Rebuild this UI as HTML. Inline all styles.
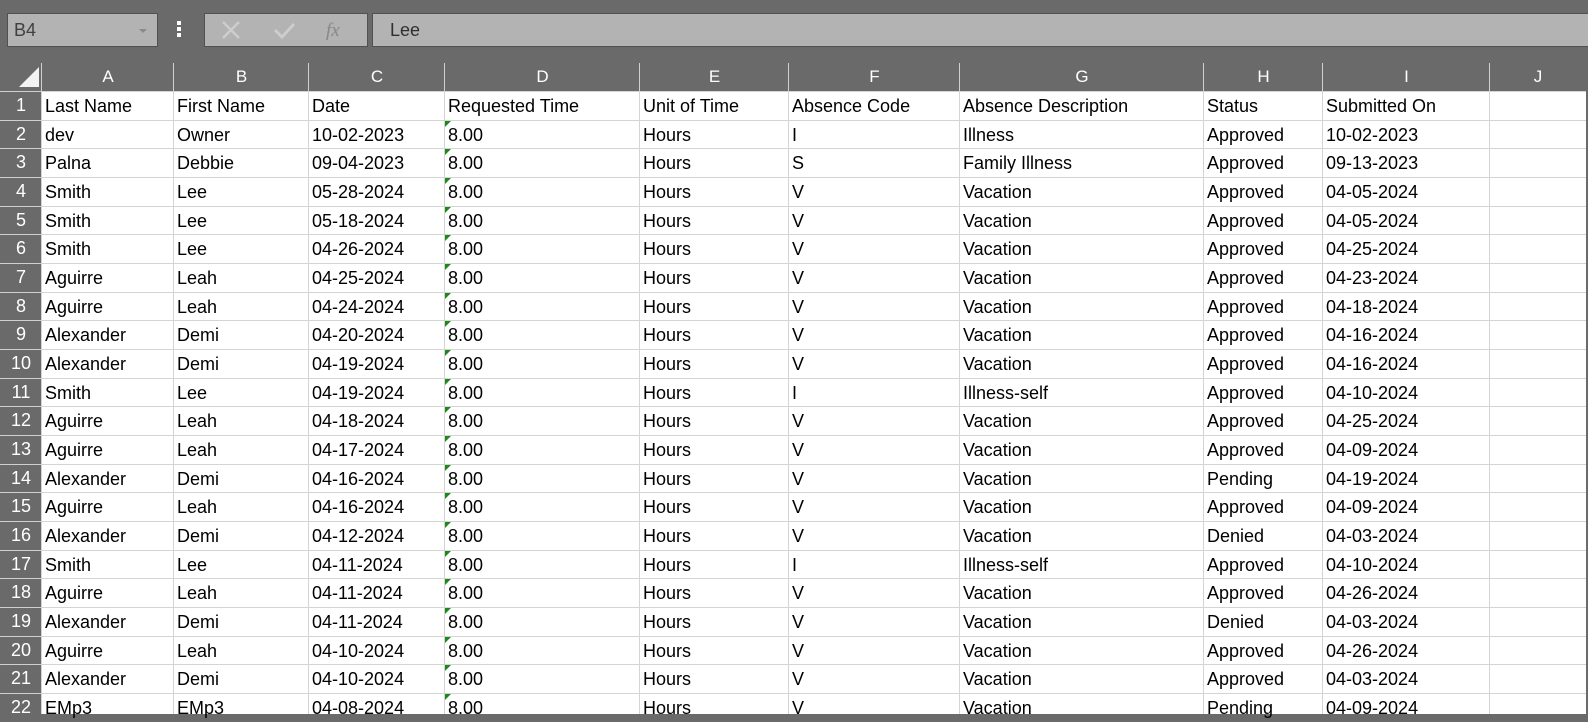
<!DOCTYPE html><html><head><meta charset="utf-8"><style>
*{margin:0;padding:0;box-sizing:border-box}
body{width:1588px;height:714px;overflow:hidden;background:#6a6a6a;font-family:"Liberation Sans",sans-serif;position:relative}
.a{position:absolute}
.c{position:absolute;font-size:18px;color:#000;white-space:nowrap;line-height:28px;padding-left:3px;overflow:hidden}
.h{position:absolute;color:#fff;font-size:17px;text-align:center;line-height:28px}
</style></head><body>
<div class="a" style="left:7px;top:13px;width:151px;height:34px;background:#b3b3b3;border:1px solid #505050"></div>
<div class="a" style="left:14px;top:13px;line-height:34px;font-size:18px;color:#404040">B4</div>
<div class="a" style="left:139px;top:29px;border-left:4px solid transparent;border-right:4px solid transparent;border-top:4px solid #8a8a8a"></div>
<div class="a" style="left:177px;top:21px;width:4px;height:4px;background:#fff"></div>
<div class="a" style="left:177px;top:27px;width:4px;height:4px;background:#fff"></div>
<div class="a" style="left:177px;top:33px;width:4px;height:4px;background:#fff"></div>
<div class="a" style="left:204px;top:13px;width:164px;height:34px;background:#b3b3b3;border:1px solid #505050"></div>
<svg class="a" style="left:204px;top:13px" width="164" height="34"><path d="M19 9 L35 25 M35 9 L19 25" stroke="#cdcdcd" stroke-width="2.5"/><path d="M71 17 L78 24 L90 11" stroke="#cdcdcd" stroke-width="3" fill="none"/><text x="122" y="23" font-family="Liberation Serif" font-style="italic" font-size="19" fill="#888">fx</text></svg>
<div class="a" style="left:372px;top:13px;width:1216px;height:34px;background:#b3b3b3;border:1px solid #505050;border-right:none"></div>
<div class="a" style="left:390px;top:13px;line-height:34px;font-size:18px;color:#303030">Lee</div>
<div class="a" style="left:0;top:91px;width:1588px;height:623px;background:#fff"></div>
<div class="a" style="left:0;top:63px;width:42px;height:651px;background:#6a6a6a"></div>
<div class="a" style="left:1586px;top:63px;width:2px;height:651px;background:#6a6a6a"></div>
<svg class="a" style="left:18px;top:66px" width="22" height="22"><path d="M21 1 L21 21 L1 21 Z" fill="#f2f2f2"/></svg>
<div id="g"></div>
<script>
const cols=[42,174,309,445,640,789,960,1204,1323,1490,1586];
const L="ABCDEFGHIJ";
const data=[["Last Name","First Name","Date","Requested Time","Unit of Time","Absence Code","Absence Description","Status","Submitted On"],
["dev","Owner","10-02-2023","8.00","Hours","I","Illness","Approved","10-02-2023"],
["Palna","Debbie","09-04-2023","8.00","Hours","S","Family Illness","Approved","09-13-2023"],
["Smith","Lee","05-28-2024","8.00","Hours","V","Vacation","Approved","04-05-2024"],
["Smith","Lee","05-18-2024","8.00","Hours","V","Vacation","Approved","04-05-2024"],
["Smith","Lee","04-26-2024","8.00","Hours","V","Vacation","Approved","04-25-2024"],
["Aguirre","Leah","04-25-2024","8.00","Hours","V","Vacation","Approved","04-23-2024"],
["Aguirre","Leah","04-24-2024","8.00","Hours","V","Vacation","Approved","04-18-2024"],
["Alexander","Demi","04-20-2024","8.00","Hours","V","Vacation","Approved","04-16-2024"],
["Alexander","Demi","04-19-2024","8.00","Hours","V","Vacation","Approved","04-16-2024"],
["Smith","Lee","04-19-2024","8.00","Hours","I","Illness-self","Approved","04-10-2024"],
["Aguirre","Leah","04-18-2024","8.00","Hours","V","Vacation","Approved","04-25-2024"],
["Aguirre","Leah","04-17-2024","8.00","Hours","V","Vacation","Approved","04-09-2024"],
["Alexander","Demi","04-16-2024","8.00","Hours","V","Vacation","Pending","04-19-2024"],
["Aguirre","Leah","04-16-2024","8.00","Hours","V","Vacation","Approved","04-09-2024"],
["Alexander","Demi","04-12-2024","8.00","Hours","V","Vacation","Denied","04-03-2024"],
["Smith","Lee","04-11-2024","8.00","Hours","I","Illness-self","Approved","04-10-2024"],
["Aguirre","Leah","04-11-2024","8.00","Hours","V","Vacation","Approved","04-26-2024"],
["Alexander","Demi","04-11-2024","8.00","Hours","V","Vacation","Denied","04-03-2024"],
["Aguirre","Leah","04-10-2024","8.00","Hours","V","Vacation","Approved","04-26-2024"],
["Alexander","Demi","04-10-2024","8.00","Hours","V","Vacation","Approved","04-03-2024"],
["EMp3","EMp3","04-08-2024","8.00","Hours","V","Vacation","Pending","04-09-2024"]];
let h="";const R=28.67,T=91;
for(let i=0;i<10;i++){const x=cols[i],w=cols[i+1]-x;
h+=`<div class="h" style="left:${x}px;top:63px;width:${w}px">${L[i]}</div>`;
h+=`<div class="a" style="left:${x-1}px;top:63px;width:1px;height:28px;background:#d0d0d0"></div>`;
h+=`<div class="a" style="left:${x-1}px;top:91px;width:1px;height:623px;background:#d4d4d4"></div>`;}
for(let r=0;r<22;r++){const y=T+r*R;
h+=`<div class="a" style="left:0;top:${y}px;width:42px;height:1px;background:#d0d0d0"></div>`;
h+=`<div class="h" style="left:0;top:${y}px;width:42px;font-size:18px">${r+1}</div>`;
h+=`<div class="a" style="left:42px;top:${y}px;width:1544px;height:1px;background:#d4d4d4"></div>`;
data[r].forEach((t,i)=>{h+=`<div class="c" style="left:${cols[i]}px;top:${y+1}px;width:${cols[i+1]-cols[i]-1}px">${t}</div>`;});
if(r>0)h+=`<svg class="a" style="left:${cols[3]}px;top:${y+1}px" width="7" height="7"><path d="M0 0H6L0 6Z" fill="#1a8a1a"/></svg>`;}
document.getElementById("g").innerHTML=h;
</script>
</body></html>
